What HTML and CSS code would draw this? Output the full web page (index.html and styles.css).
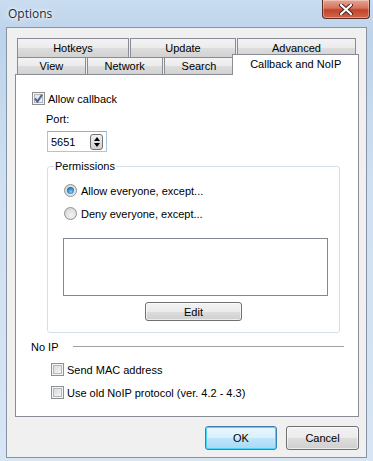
FILE: index.html
```html
<!DOCTYPE html>
<html>
<head>
  <title>Options</title>
  <meta name="viewport" content="width=device-width, initial-scale=1.0">
  <link rel="stylesheet" href="styles.css">
</head>
<body>
  <div class="window">
    <div class="titlebar">
      <span class="title">Options</span>
      <button class="close-btn">
        <svg width="14" height="11" viewBox="0 0 14 11">
          <path d="M2 1 L12 10 M12 1 L2 10" stroke="#4a2018" stroke-width="4" stroke-linecap="round"/>
          <path d="M2 1 L12 10 M12 1 L2 10" stroke="#fff" stroke-width="2.2" stroke-linecap="round"/>
        </svg>
      </button>
    </div>

    <div class="client">
      <div class="tab-rows">
        <div class="tab-row">
          <div class="tab w-hotkeys">Hotkeys</div>
          <div class="tab w-update">Update</div>
          <div class="tab w-advanced">Advanced</div>
        </div>
        <div class="tab-row second">
          <div class="tab w-view">View</div>
          <div class="tab w-network">Network</div>
          <div class="tab w-search">Search</div>
          <div class="tab selected w-callback">Callback and NoIP</div>
        </div>
      </div>

      <div class="panel">
        <div class="check-row first">
          <span class="checkbox checked">
            <svg width="9" height="9" viewBox="0 0 9 9">
              <path d="M1 4.5 L3.5 7.5 L8 0.8" fill="none" stroke="#4c62a0" stroke-width="2"/>
            </svg>
          </span>
          <span>Allow callback</span>
        </div>

        <div class="port-label">Port:</div>
        <div class="spin">
          <span class="spin-value">5651</span>
          <span class="spin-btn">
            <span class="arrow up"></span>
            <span class="arrow down"></span>
          </span>
        </div>

        <div class="group">
          <div class="legend">Permissions</div>
          <div class="radio-row first">
            <span class="radio on"><span class="dot"></span></span>
            <span>Allow everyone, except...</span>
          </div>
          <div class="radio-row">
            <span class="radio"></span>
            <span>Deny everyone, except...</span>
          </div>
          <div class="listbox"></div>
          <div class="edit-wrap">
            <button class="btn edit-btn">Edit</button>
          </div>
        </div>

        <div class="section">
          <span>No IP</span>
          <span class="rule"></span>
        </div>

        <div class="check-row sub">
          <span class="checkbox"></span>
          <span>Send MAC address</span>
        </div>
        <div class="check-row sub">
          <span class="checkbox"></span>
          <span>Use old NoIP protocol (ver. 4.2 - 4.3)</span>
        </div>
      </div>

      <div class="dialog-buttons">
        <button class="btn default">OK</button>
        <button class="btn">Cancel</button>
      </div>
    </div>
  </div>
</body>
</html>
```

FILE: styles.css
```css
body {
  margin: 0;
  font-family: Tahoma, "Liberation Sans", Arial, sans-serif;
  font-size: 11px;
  color: #000;
}

.window {
  width: 373px;
  height: 461px;
  overflow: hidden;
  background: linear-gradient(180deg, #c9dcf0 0%, #bdd3ea 8%, #cfe0f2 40%, #d7e5f4 100%);
  display: flex;
  flex-direction: column;
}

.titlebar {
  height: 27px;
  display: flex;
  align-items: flex-start;
}

.title {
  font-family: "Open Sans", "Noto Sans", sans-serif;
  font-size: 12px;
  margin: 5px 0 0 8px;
  color: #1b2a3a;
  text-shadow: 0 0 6px #fff, 0 0 3px #fff;
}

.close-btn {
  margin-left: auto;
  margin-right: 3px;
  width: 48px;
  height: 19px;
  border: 1px solid #5b2d28;
  border-top: none;
  border-radius: 0 0 4px 4px;
  background: linear-gradient(180deg, #e8a493 0%, #d4735d 45%, #c0442b 55%, #d3654a 100%);
  box-shadow: inset 0 0 0 1px rgba(255,255,255,0.35);
  display: flex;
  align-items: center;
  justify-content: center;
  padding: 0;
}

.client {
  flex: 1;
  margin: 0 6px 3px 6px;
  border: 1px solid #8593a3;
  background: #f0f0f0;
  padding: 10px 7px 0 8px;
}

.tab-rows {
  padding-left: 2px;
}

.tab-row {
  display: flex;
  gap: 1px;
}

.tab-row.second {
  margin-top: -1px;
}

.tab {
  box-sizing: border-box;
  height: 20px;
  border: 1px solid #898c95;
  background: linear-gradient(180deg, #f3f3f3 0%, #ebebeb 50%, #dddddd 51%, #d2d2d2 100%);
  display: flex;
  align-items: center;
  justify-content: center;
  padding-bottom: 1px;
}

.second .tab {
  height: 18px;
}

.tab.selected {
  position: relative;
  z-index: 2;
  height: 21px;
  margin-top: -3px;
  margin-left: -3px;
  margin-bottom: -1px;
  border-bottom: none;
  background: #fff;
  align-items: flex-start;
  padding-top: 3px;
}

.w-hotkeys { width: 112px; }
.w-update { width: 106px; }
.w-advanced { width: 119px; }
.w-view { width: 69px; }
.w-network { width: 76px; }
.w-search { width: 71px; }
.w-callback { width: 127px; }

.panel {
  position: relative;
  z-index: 1;
  box-sizing: border-box;
  height: 343px;
  margin-top: -1px;
  border: 1px solid #898c95;
  background: #fff;
  padding: 0 0 0 0;
}

.check-row, .radio-row {
  display: flex;
  align-items: center;
  gap: 3px;
  height: 13px;
}

.check-row.first {
  margin: 17px 0 0 16px;
}

.check-row.sub {
  margin: 10px 0 0 35px;
}

.checkbox {
  box-sizing: border-box;
  width: 13px;
  height: 13px;
  border: 1px solid #8e8f8f;
  background: #f4f4f4;
  box-shadow: inset 0 0 0 1px #f4f4f4, inset 0 0 0 2px #b4b7bc;
  background-image: linear-gradient(135deg, #d0d4d9 0%, #eef0f2 70%, #f8f8f8 100%);
  display: flex;
  align-items: center;
  justify-content: center;
}

.checkbox.checked {
  background-image: linear-gradient(135deg, #dfe3ea 0%, #f2f4f6 100%);
}

.port-label {
  margin: 8px 0 0 30px;
  height: 13px;
  line-height: 13px;
}

.spin {
  box-sizing: border-box;
  width: 60px;
  height: 21px;
  margin: 5px 0 0 31px;
  border: 1px solid #a9c5e0;
  border-top-color: #8fb2d4;
  display: flex;
  align-items: center;
  padding: 0 3px 0 3px;
}

.spin-value {
  flex: 1;
}

.spin-btn {
  box-sizing: border-box;
  width: 13px;
  height: 16px;
  border: 1px solid #707070;
  border-radius: 3px;
  background: linear-gradient(180deg, #f2f2f2 0%, #e0e0e0 50%, #d0d0d0 100%);
  display: flex;
  flex-direction: column;
  align-items: center;
  justify-content: space-around;
  padding: 1px 0;
}

.arrow {
  width: 0;
  height: 0;
  border-left: 3.5px solid transparent;
  border-right: 3.5px solid transparent;
}

.arrow.up {
  border-bottom: 4px solid #000;
}

.arrow.down {
  border-top: 4px solid #000;
}

.group {
  box-sizing: border-box;
  width: 293px;
  margin: 14px 0 0 31px;
  border: 1px solid #d5dfe5;
  border-radius: 3px;
  padding: 0 0 11px 0;
}

.legend {
  display: inline-block;
  margin: -7px 0 0 6px;
  padding: 0 1px;
  background: #fff;
  height: 13px;
  line-height: 13px;
  vertical-align: top;
}

.radio-row {
  margin-left: 16px;
  gap: 4px;
}

.radio-row.first {
  margin-top: 5px;
}

.radio-row + .radio-row {
  margin-top: 10px;
}

.radio {
  box-sizing: border-box;
  width: 13px;
  height: 13px;
  border-radius: 50%;
  border: 1px solid #8e8f8f;
  background: radial-gradient(circle at 60% 65%, #f4f4f4 0%, #d4d6d9 80%);
  display: flex;
  align-items: center;
  justify-content: center;
}

.radio .dot {
  width: 7px;
  height: 7px;
  border-radius: 50%;
  background: radial-gradient(circle at 55% 65%, #86d0f5 0%, #2a7fc4 55%, #0c4d8a 100%);
}

.listbox {
  box-sizing: border-box;
  width: 265px;
  height: 58px;
  margin: 18px 0 0 15px;
  border: 1px solid #828790;
  background: #fff;
}

.edit-wrap {
  display: flex;
  justify-content: center;
  margin-top: 6px;
}

.btn {
  box-sizing: border-box;
  font-family: inherit;
  font-size: 11px;
  color: #000;
  border: 1px solid #707070;
  border-radius: 3px;
  background: linear-gradient(180deg, #f2f2f2 0%, #ebebeb 50%, #dddddd 51%, #cfcfcf 100%);
  box-shadow: inset 0 0 0 1px rgba(255,255,255,0.6);
  padding: 0;
}

.edit-btn {
  width: 97px;
  height: 19px;
}

.section {
  display: flex;
  align-items: center;
  height: 13px;
  margin: 7px 14px 0 15px;
}

.rule {
  flex: 1;
  height: 1px;
  margin-left: 14px;
  background: #a0a0a0;
  border-bottom: 1px solid #fff;
}

.dialog-buttons {
  display: flex;
  justify-content: flex-end;
  gap: 9px;
  margin-top: 9px;
}

.dialog-buttons .btn {
  width: 72px;
  height: 24px;
}

.dialog-buttons .btn + .btn {
  width: 73px;
}

.btn.default {
  border-color: #3c7fb1;
  background: linear-gradient(180deg, #eaf6fd 0%, #d9f0fc 50%, #bee6fd 51%, #a7d9f5 100%);
  box-shadow: inset 0 0 0 1px #48d6fa;
}
```
